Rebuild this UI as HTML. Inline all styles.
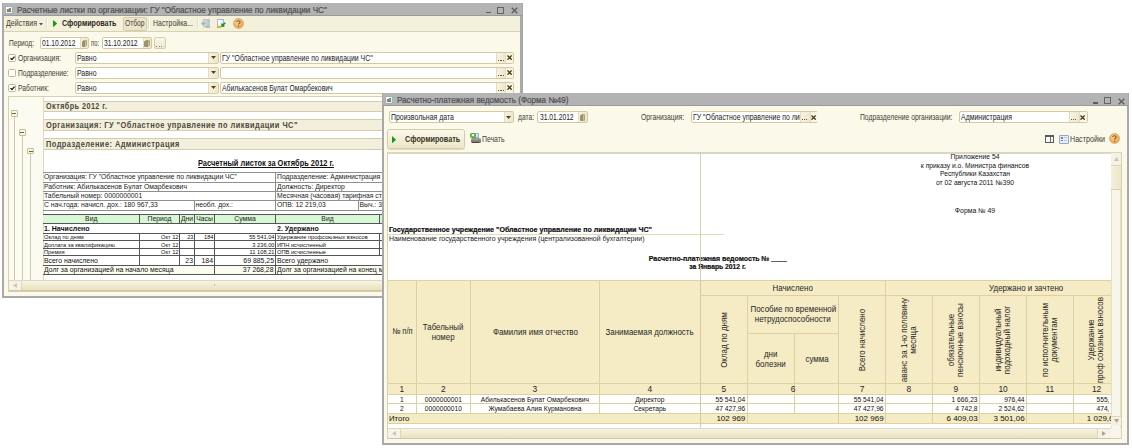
<!DOCTYPE html>
<html><head><meta charset="utf-8">
<style>
*{margin:0;padding:0;box-sizing:border-box}
html,body{width:1132px;height:448px;overflow:hidden;background:#fff;font-family:"Liberation Sans",sans-serif;color:#222}
.a{position:absolute}
.t{position:absolute;white-space:nowrap;line-height:1}
</style></head><body>
<div class="a" style="left:2px;top:3px;width:521px;height:295px;background:#a9a9a9"></div>
<div class="a" style="left:3px;top:3px;width:519px;height:12px;background:#b3b3b3"></div>
<div class="a" style="left:3px;top:15px;width:519px;height:1px;background:#9a9a9a"></div>
<div class="a" style="left:4px;top:16px;width:516px;height:280px;background:#fbf9ea"></div>
<div class="a" style="left:5px;top:5.6px;width:7.5px;height:8.2px;background:linear-gradient(135deg,#ffffff,#dfe7f2);border:1px solid #9fb0c6;border-radius:1px"></div>
<div class="a" style="left:6.8px;top:8.8px;width:2px;height:3.4px;background:#e4584a"></div>
<div class="a" style="left:8.8px;top:8.2px;width:2px;height:4px;background:#48ae4a"></div>
<div class="t" style="left:16.7px;top:5.77px;font-size:8.3px;color:#4e4e4e;transform:scaleX(0.977);transform-origin:0 0;-webkit-text-stroke:0.2px #4e4e4e;">Расчетные листки по организации: ГУ "Областное управление по ликвидации ЧС"</div>
<div class="a" style="left:486px;top:11.5px;width:5.3px;height:1.5px;background:#5c5c5c"></div>
<div class="a" style="left:497px;top:6.5px;width:7px;height:7px;border:1px solid #646464;border-top-width:1.5px"></div>
<svg class="a" style="left:511px;top:7px" width="7" height="7" viewBox="0 0 7 7"><path d="M0.7 0.7L6.3 6.3M6.3 0.7L0.7 6.3" stroke="#5c5c5c" stroke-width="1.25"/></svg>
<div class="a" style="left:4px;top:16px;width:516px;height:15px;background:#f3f0dc"></div>
<div class="a" style="left:4px;top:31px;width:516px;height:1px;background:#d9d2b2"></div>
<div class="t" style="left:6px;top:19.17px;font-size:8.3px;color:#434032;transform:scaleX(0.852);transform-origin:0 0;">Действия</div>
<svg class="a" style="left:38.8px;top:23.3px" width="4" height="2.5" viewBox="0 0 4 2.5"><path d="M0 0H4L2 2.5Z" fill="#555"/></svg>
<div class="a" style="left:46px;top:18px;width:1px;height:11px;background:#e6e0c6;box-shadow:1px 0 0 #fffdf4"></div>
<svg class="a" style="left:53px;top:20.3px" width="4.3" height="7.2" viewBox="0 0 4.3 7.2"><path d="M0 0L4.3 3.6L0 7.2Z" fill="#17961a"/></svg>
<div class="t" style="left:61.5px;top:19.17px;font-size:8.3px;color:#2e2a18;font-weight:bold;transform:scaleX(0.862);transform-origin:0 0;">Сформировать</div>
<div class="a" style="left:122.5px;top:17px;width:24.3px;height:13.8px;background:#ebe6cb;border:1px solid #d6ceab;border-radius:2px"></div>
<div class="t" style="left:124.5px;top:19.17px;font-size:8.3px;color:#434032;transform:scaleX(0.804);transform-origin:0 0;">Отбор</div>
<div class="a" style="left:148px;top:18px;width:1px;height:11px;background:#e6e0c6;box-shadow:1px 0 0 #fffdf4"></div>
<div class="t" style="left:153px;top:19.17px;font-size:8.3px;color:#434032;transform:scaleX(0.837);transform-origin:0 0;">Настройка...</div>
<div class="a" style="left:197px;top:18px;width:1px;height:11px;background:#e6e0c6;box-shadow:1px 0 0 #fffdf4"></div>
<div class="a" style="left:203px;top:19px;width:6.5px;height:8px;background:linear-gradient(90deg,#cfd8e2,#bcc7d4);border:1px solid #b9c4d0"></div>
<svg class="a" style="left:200.5px;top:21px" width="5" height="5" viewBox="0 0 5 5"><path d="M4.5 2.5H1M2.5 1L1 2.5L2.5 4" fill="none" stroke="#9bbca6" stroke-width="1.4"/></svg>
<svg class="a" style="left:205px;top:24.5px" width="5.5" height="3" viewBox="0 0 5.5 3"><path d="M0 3L2.75 0L5.5 3Z" fill="#bdb8a8"/></svg>
<div class="a" style="left:217px;top:19px;width:7px;height:8px;background:linear-gradient(90deg,#ffffff,#dfe8f3);border:1px solid #a6b8cf"></div>
<svg class="a" style="left:216px;top:25px" width="6" height="3.2" viewBox="0 0 6 3.2"><path d="M0 3.2L3 0L6 3.2Z" fill="#e8b420"/></svg>
<svg class="a" style="left:220.5px;top:21.5px" width="5" height="5" viewBox="0 0 5 5"><path d="M4.3 0.7L1.2 3.8M1 1.6V4H3.4" fill="none" stroke="#1e9030" stroke-width="1.5"/></svg>
<svg class="a" style="left:232.5px;top:18.1px" width="11" height="11" viewBox="0 0 11 11"><defs><radialGradient id="hg238" cx="45%" cy="40%" r="60%"><stop offset="0" stop-color="#fbd9a0"/><stop offset="0.65" stop-color="#f4b25a"/><stop offset="1" stop-color="#e9a04a"/></radialGradient></defs><circle cx="5.5" cy="5.5" r="5" fill="url(#hg238)" stroke="#d8a872" stroke-width="0.8"/><path d="M3.9 4.3Q3.9 2.8 5.5 2.8Q7.1 2.8 7.1 4.2Q7.1 5 6.1 5.5Q5.6 5.8 5.6 6.6" fill="none" stroke="#7e5a3a" stroke-width="1.1"/><circle cx="5.6" cy="8.1" r="0.7" fill="#7e5a3a"/></svg>
<div class="t" style="left:8.5px;top:38.57px;font-size:8.3px;color:#434032;transform:scaleX(0.796);transform-origin:0 0;">Период:</div>
<div class="a" style="left:39.5px;top:37px;width:49.5px;height:12px;background:#fff;border:1px solid #d3caa2;border-radius:2px"></div>
<div class="t" style="left:41.5px;top:38.57px;font-size:8.3px;color:#222;transform:scaleX(0.804);transform-origin:0 0;">01.10.2012</div>
<div class="a" style="left:80px;top:38px;width:8px;height:10px;background:linear-gradient(90deg,#f4f1de,#ebe6cb);border-left:1px solid #e2dcc0"></div>
<div class="a" style="left:82.5px;top:39.8px;width:4.5px;height:6.5px;background:#b0a679;border-radius:1px"></div>
<div class="a" style="left:81.8px;top:40.6px;width:4.5px;height:6.5px;background:#9c9264;border-radius:1px;border-right:1px solid #c8c09a"></div>
<div class="t" style="left:91px;top:38.57px;font-size:8.3px;color:#434032;transform:scaleX(0.701);transform-origin:0 0;">по:</div>
<div class="a" style="left:102px;top:37px;width:49.5px;height:12px;background:#fff;border:1px solid #d3caa2;border-radius:2px"></div>
<div class="t" style="left:104px;top:38.57px;font-size:8.3px;color:#222;transform:scaleX(0.809);transform-origin:0 0;">31.10.2012</div>
<div class="a" style="left:142.5px;top:38px;width:8px;height:10px;background:linear-gradient(90deg,#f4f1de,#ebe6cb);border-left:1px solid #e2dcc0"></div>
<div class="a" style="left:145.0px;top:39.8px;width:4.5px;height:6.5px;background:#b0a679;border-radius:1px"></div>
<div class="a" style="left:144.3px;top:40.6px;width:4.5px;height:6.5px;background:#9c9264;border-radius:1px;border-right:1px solid #c8c09a"></div>
<div class="a" style="left:153.5px;top:37px;width:12px;height:12px;background:linear-gradient(#f8f6e8,#ede8d0);border:1px solid #d6ceab;border-radius:2px"></div>
<div class="a" style="left:156.3px;top:45.5px;width:1px;height:1px;background:#8c8466"></div>
<div class="a" style="left:158.60000000000002px;top:45.5px;width:1px;height:1px;background:#8c8466"></div>
<div class="a" style="left:160.9px;top:45.5px;width:1px;height:1px;background:#8c8466"></div>
<div class="a" style="left:8.3px;top:54px;width:7.8px;height:7.8px;background:#fff;border:1px solid #c2b994;border-radius:1.5px"></div>
<svg class="a" style="left:9.8px;top:55.8px" width="5" height="4.4" viewBox="0 0 5 4.4"><path d="M0.5 2.2L1.9 3.7L4.5 0.6" fill="none" stroke="#111" stroke-width="1.2"/></svg>
<div class="t" style="left:18px;top:53.57px;font-size:8.3px;color:#434032;transform:scaleX(0.821);transform-origin:0 0;">Организация:</div>
<div class="a" style="left:75px;top:52px;width:143.5px;height:11.6px;background:#fff;border:1px solid #d3caa2;border-radius:2px"></div>
<div class="t" style="left:77px;top:53.57px;font-size:8.3px;color:#222;transform:scaleX(0.83);transform-origin:0 0;">Равно</div>
<div class="a" style="left:208.4px;top:53px;width:9.6px;height:9.6px;background:linear-gradient(90deg,#f4f1de,#ece7cd);border-left:1px solid #e2dcc0"></div>
<svg class="a" style="left:210.70000000000002px;top:56.3px" width="5" height="3" viewBox="0 0 5 3"><path d="M0 0H5L2.5 3Z" fill="#5a4208"/></svg>
<div class="a" style="left:220.2px;top:52px;width:294px;height:11.6px;background:#fff;border:1px solid #d3caa2;border-radius:2px"></div>
<div class="t" style="left:221.8px;top:53.57px;font-size:8.3px;color:#222;transform:scaleX(0.833);transform-origin:0 0;">ГУ "Областное управление по ликвидации ЧС"</div>
<div class="a" style="left:496.4px;top:53px;width:8.9px;height:9.6px;background:linear-gradient(90deg,#f6f3e2,#ede8cf);border-left:1px solid #e2dcc0"></div>
<div class="a" style="left:498.2px;top:59.6px;width:1.2px;height:1.2px;background:#6a5a28"></div>
<div class="a" style="left:500.4px;top:59.6px;width:1.2px;height:1.2px;background:#6a5a28"></div>
<div class="a" style="left:502.59999999999997px;top:59.6px;width:1.2px;height:1.2px;background:#6a5a28"></div>
<div class="a" style="left:505.3px;top:53px;width:8.2px;height:9.6px;background:#f7f5e8;border-left:1px solid #e2dcc0"></div>
<svg class="a" style="left:506.8px;top:55.199999999999996px" width="5.2" height="5.2" viewBox="0 0 5.2 5.2"><path d="M0.5 0.5L4.7 4.7M4.7 0.5L0.5 4.7" stroke="#4a3808" stroke-width="1.3"/></svg>
<div class="a" style="left:8.3px;top:69px;width:7.8px;height:7.8px;background:#fff;border:1px solid #c2b994;border-radius:1.5px"></div>
<div class="t" style="left:18px;top:68.57px;font-size:8.3px;color:#434032;transform:scaleX(0.806);transform-origin:0 0;">Подразделение:</div>
<div class="a" style="left:75px;top:67px;width:143.5px;height:11.6px;background:#fff;border:1px solid #d3caa2;border-radius:2px"></div>
<div class="t" style="left:77px;top:68.57px;font-size:8.3px;color:#222;transform:scaleX(0.83);transform-origin:0 0;">Равно</div>
<div class="a" style="left:208.4px;top:68px;width:9.6px;height:9.6px;background:linear-gradient(90deg,#f4f1de,#ece7cd);border-left:1px solid #e2dcc0"></div>
<svg class="a" style="left:210.70000000000002px;top:71.3px" width="5" height="3" viewBox="0 0 5 3"><path d="M0 0H5L2.5 3Z" fill="#5a4208"/></svg>
<div class="a" style="left:220.2px;top:67px;width:294px;height:11.6px;background:#fff;border:1px solid #d3caa2;border-radius:2px"></div>
<div class="a" style="left:496.4px;top:68px;width:8.9px;height:9.6px;background:linear-gradient(90deg,#f6f3e2,#ede8cf);border-left:1px solid #e2dcc0"></div>
<div class="a" style="left:498.2px;top:74.6px;width:1.2px;height:1.2px;background:#6a5a28"></div>
<div class="a" style="left:500.4px;top:74.6px;width:1.2px;height:1.2px;background:#6a5a28"></div>
<div class="a" style="left:502.59999999999997px;top:74.6px;width:1.2px;height:1.2px;background:#6a5a28"></div>
<div class="a" style="left:505.3px;top:68px;width:8.2px;height:9.6px;background:#f7f5e8;border-left:1px solid #e2dcc0"></div>
<svg class="a" style="left:506.8px;top:70.2px" width="5.2" height="5.2" viewBox="0 0 5.2 5.2"><path d="M0.5 0.5L4.7 4.7M4.7 0.5L0.5 4.7" stroke="#4a3808" stroke-width="1.3"/></svg>
<div class="a" style="left:8.3px;top:84px;width:7.8px;height:7.8px;background:#fff;border:1px solid #c2b994;border-radius:1.5px"></div>
<svg class="a" style="left:9.8px;top:85.8px" width="5" height="4.4" viewBox="0 0 5 4.4"><path d="M0.5 2.2L1.9 3.7L4.5 0.6" fill="none" stroke="#111" stroke-width="1.2"/></svg>
<div class="t" style="left:18px;top:83.57px;font-size:8.3px;color:#434032;transform:scaleX(0.815);transform-origin:0 0;">Работник:</div>
<div class="a" style="left:75px;top:82px;width:143.5px;height:11.6px;background:#fff;border:1px solid #d3caa2;border-radius:2px"></div>
<div class="t" style="left:77px;top:83.57px;font-size:8.3px;color:#222;transform:scaleX(0.83);transform-origin:0 0;">Равно</div>
<div class="a" style="left:208.4px;top:83px;width:9.6px;height:9.6px;background:linear-gradient(90deg,#f4f1de,#ece7cd);border-left:1px solid #e2dcc0"></div>
<svg class="a" style="left:210.70000000000002px;top:86.3px" width="5" height="3" viewBox="0 0 5 3"><path d="M0 0H5L2.5 3Z" fill="#5a4208"/></svg>
<div class="a" style="left:220.2px;top:82px;width:294px;height:11.6px;background:#fff;border:1px solid #d3caa2;border-radius:2px"></div>
<div class="t" style="left:221.8px;top:83.57px;font-size:8.3px;color:#222;transform:scaleX(0.825);transform-origin:0 0;">Абилькасенов Булат Омарбекович</div>
<div class="a" style="left:496.4px;top:83px;width:8.9px;height:9.6px;background:linear-gradient(90deg,#f6f3e2,#ede8cf);border-left:1px solid #e2dcc0"></div>
<div class="a" style="left:498.2px;top:89.6px;width:1.2px;height:1.2px;background:#6a5a28"></div>
<div class="a" style="left:500.4px;top:89.6px;width:1.2px;height:1.2px;background:#6a5a28"></div>
<div class="a" style="left:502.59999999999997px;top:89.6px;width:1.2px;height:1.2px;background:#6a5a28"></div>
<div class="a" style="left:505.3px;top:83px;width:8.2px;height:9.6px;background:#f7f5e8;border-left:1px solid #e2dcc0"></div>
<svg class="a" style="left:506.8px;top:85.2px" width="5.2" height="5.2" viewBox="0 0 5.2 5.2"><path d="M0.5 0.5L4.7 4.7M4.7 0.5L0.5 4.7" stroke="#4a3808" stroke-width="1.3"/></svg>
<div class="a" style="left:8px;top:96px;width:380px;height:196px;background:#fcfbf1;border:1px solid #d8d1b0"></div>
<div class="a" style="left:42.5px;top:97px;width:345px;height:183px;background:#fff;border-left:1px solid #e0d9bb"></div>
<div class="a" style="left:43.5px;top:101px;width:345px;height:11px;background:#f2efdc;border-top:1px solid #d3cca9;border-bottom:1px solid #d3cca9"></div>
<div class="a" style="left:43.5px;top:119px;width:345px;height:12px;background:#f2efdc;border-top:1px solid #d3cca9;border-bottom:1px solid #d3cca9"></div>
<div class="a" style="left:43.5px;top:138px;width:345px;height:12px;background:#f2efdc;border-top:1px solid #d3cca9;border-bottom:1px solid #d3cca9"></div>
<div class="t" style="left:45.5px;top:102.38px;font-size:9.0px;color:#4b4a40;font-weight:bold;transform:scaleX(0.805);transform-origin:0 0;letter-spacing:0.55px;">Октябрь 2012 г.</div>
<div class="t" style="left:45.5px;top:120.98px;font-size:9.0px;color:#4b4a40;font-weight:bold;transform:scaleX(0.827);transform-origin:0 0;letter-spacing:0.55px;">Организация: ГУ "Областное управление по ликвидации ЧС"</div>
<div class="t" style="left:45.5px;top:139.58px;font-size:9.0px;color:#4b4a40;font-weight:bold;transform:scaleX(0.823);transform-origin:0 0;letter-spacing:0.55px;">Подразделение: Администрация</div>
<div class="a" style="left:13.8px;top:116.5px;width:1px;height:163.5px;background:#d2caa6"></div>
<div class="a" style="left:10.8px;top:110.2px;width:7px;height:6.6px;background:#f8f6e6;border:1px solid #c5bd96;border-radius:1px"></div>
<div class="a" style="left:12.3px;top:113.0px;width:4px;height:1px;background:#6e6444"></div>
<div class="a" style="left:21.9px;top:135.3px;width:1px;height:144.7px;background:#d2caa6"></div>
<div class="a" style="left:18.9px;top:129.0px;width:7px;height:6.6px;background:#f8f6e6;border:1px solid #c5bd96;border-radius:1px"></div>
<div class="a" style="left:20.4px;top:131.8px;width:4px;height:1px;background:#6e6444"></div>
<div class="a" style="left:30.1px;top:154.1px;width:1px;height:125.9px;background:#d2caa6"></div>
<div class="a" style="left:27.1px;top:147.79999999999998px;width:7px;height:6.6px;background:#f8f6e6;border:1px solid #c5bd96;border-radius:1px"></div>
<div class="a" style="left:28.6px;top:150.6px;width:4px;height:1px;background:#6e6444"></div>
<div class="t" style="left:197.6px;top:159.17px;font-size:8.3px;color:#111;font-weight:bold;transform:scaleX(0.897);transform-origin:0 0;text-decoration:underline;">Расчетный листок за Октябрь 2012 г.</div>
<div class="a" style="left:43px;top:171.8px;width:345px;height:1px;background:#8f8f8f"></div>
<div class="a" style="left:43px;top:181.5px;width:345px;height:1px;background:#8f8f8f"></div>
<div class="a" style="left:43px;top:190.8px;width:345px;height:1px;background:#8f8f8f"></div>
<div class="a" style="left:43px;top:200.0px;width:345px;height:1px;background:#8f8f8f"></div>
<div class="a" style="left:43px;top:209.8px;width:345px;height:1px;background:#8f8f8f"></div>
<div class="a" style="left:275px;top:172px;width:1px;height:38.5px;background:#8f8f8f"></div>
<div class="a" style="left:193.5px;top:200.5px;width:1px;height:10px;background:#8f8f8f"></div>
<div class="a" style="left:357.5px;top:200.5px;width:1px;height:10px;background:#8f8f8f"></div>
<div class="t" style="left:44px;top:174.24px;font-size:6.8px;color:#1a1a1a;">Организация: ГУ "Областное управление по ликвидации ЧС"</div>
<div class="t" style="left:277px;top:174.24px;font-size:6.8px;color:#1a1a1a;">Подразделение: Администрация</div>
<div class="t" style="left:44px;top:183.74px;font-size:6.8px;color:#1a1a1a;">Работник: Абилькасенов  Булат  Омарбекович</div>
<div class="t" style="left:277px;top:183.74px;font-size:6.8px;color:#1a1a1a;">Должность: Директор</div>
<div class="t" style="left:44px;top:193.04px;font-size:6.8px;color:#1a1a1a;">Табельный номер: 0000000001</div>
<div class="t" style="left:277px;top:193.04px;font-size:6.8px;color:#1a1a1a;">Месячная (часовая) тарифная ставка</div>
<div class="t" style="left:44px;top:202.44px;font-size:6.8px;color:#1a1a1a;">С нач.года: начисл. дох.: 180 967,33</div>
<div class="t" style="left:195.5px;top:202.44px;font-size:6.8px;color:#1a1a1a;">необл. дох.:</div>
<div class="t" style="left:277px;top:202.44px;font-size:6.8px;color:#1a1a1a;">ОПВ: 12 219,03</div>
<div class="t" style="left:359.5px;top:202.44px;font-size:6.8px;color:#1a1a1a;">Выч.: 3</div>
<div class="a" style="left:43px;top:214px;width:345px;height:10px;background:#d8f7d4;border-top:1px solid #555;border-bottom:1px solid #555"></div>
<div class="a" style="left:139.0px;top:214px;width:1px;height:10px;background:#555"></div>
<div class="a" style="left:179.0px;top:214px;width:1px;height:10px;background:#555"></div>
<div class="a" style="left:194.0px;top:214px;width:1px;height:10px;background:#555"></div>
<div class="a" style="left:214.0px;top:214px;width:1px;height:10px;background:#555"></div>
<div class="a" style="left:275.0px;top:214px;width:1px;height:10px;background:#555"></div>
<div class="a" style="left:379.0px;top:214px;width:1px;height:10px;background:#555"></div>
<div class="t" style="left:43px;top:216.24px;font-size:6.8px;color:#222;width:96.5px;text-align:center;">Вид</div>
<div class="t" style="left:139.5px;top:216.24px;font-size:6.8px;color:#222;width:40.0px;text-align:center;">Период</div>
<div class="t" style="left:179.5px;top:216.24px;font-size:6.8px;color:#222;width:15.0px;text-align:center;">Дни</div>
<div class="t" style="left:194.5px;top:216.24px;font-size:6.8px;color:#222;width:20.0px;text-align:center;">Часы</div>
<div class="t" style="left:214.5px;top:216.24px;font-size:6.8px;color:#222;width:61.0px;text-align:center;">Сумма</div>
<div class="t" style="left:275.5px;top:216.24px;font-size:6.8px;color:#222;width:104.0px;text-align:center;">Вид</div>
<div class="t" style="left:44px;top:225.07px;font-size:7px;color:#111;font-weight:bold;">1. Начислено</div>
<div class="t" style="left:277px;top:225.07px;font-size:7px;color:#111;font-weight:bold;">2. Удержано</div>
<div class="a" style="left:43px;top:232.7px;width:345px;height:1px;background:#555"></div>
<div class="a" style="left:43px;top:240.0px;width:345px;height:1px;background:#555"></div>
<div class="a" style="left:43px;top:247.7px;width:345px;height:1px;background:#555"></div>
<div class="a" style="left:43px;top:254.9px;width:345px;height:1px;background:#555"></div>
<div class="a" style="left:43px;top:264.5px;width:345px;height:1px;background:#555"></div>
<div class="a" style="left:43px;top:273.5px;width:345px;height:1px;background:#555"></div>
<div class="a" style="left:139.0px;top:233px;width:1px;height:32px;background:#555"></div>
<div class="a" style="left:179.0px;top:233px;width:1px;height:32px;background:#555"></div>
<div class="a" style="left:194.0px;top:233px;width:1px;height:32px;background:#555"></div>
<div class="a" style="left:214.0px;top:233px;width:1px;height:32px;background:#555"></div>
<div class="a" style="left:275.0px;top:233px;width:1px;height:32px;background:#555"></div>
<div class="a" style="left:378.5px;top:233px;width:1px;height:22.5px;background:#555"></div>
<div class="t" style="left:44px;top:234.32px;font-size:6.0px;color:#111;transform:scaleX(0.95);transform-origin:0 0;">Оклад по дням</div>
<div class="t" style="left:139.5px;top:234.32px;font-size:6.0px;color:#111;width:38.5px;text-align:right;transform:scaleX(0.95);transform-origin:100% 0;">Окт 12</div>
<div class="t" style="left:179.5px;top:234.32px;font-size:6.0px;color:#111;width:13.5px;text-align:right;transform:scaleX(0.95);transform-origin:100% 0;">23</div>
<div class="t" style="left:194.5px;top:234.32px;font-size:6.0px;color:#111;width:18.5px;text-align:right;transform:scaleX(0.95);transform-origin:100% 0;">184</div>
<div class="t" style="left:214.5px;top:234.32px;font-size:6.0px;color:#111;width:59.5px;text-align:right;transform:scaleX(0.95);transform-origin:100% 0;">55 541,04</div>
<div class="t" style="left:277px;top:234.32px;font-size:6.0px;color:#111;transform:scaleX(0.95);transform-origin:0 0;">Удержание профсоюзных взносов</div>
<div class="t" style="left:44px;top:241.92px;font-size:6.0px;color:#111;transform:scaleX(0.95);transform-origin:0 0;">Доплата за квалификацию</div>
<div class="t" style="left:139.5px;top:241.92px;font-size:6.0px;color:#111;width:38.5px;text-align:right;transform:scaleX(0.95);transform-origin:100% 0;">Окт 12</div>
<div class="t" style="left:214.5px;top:241.92px;font-size:6.0px;color:#111;width:59.5px;text-align:right;transform:scaleX(0.95);transform-origin:100% 0;">3 236,00</div>
<div class="t" style="left:277px;top:241.92px;font-size:6.0px;color:#111;transform:scaleX(0.95);transform-origin:0 0;">ИПН исчисленный</div>
<div class="t" style="left:44px;top:249.42px;font-size:6.0px;color:#111;transform:scaleX(0.95);transform-origin:0 0;">Премия</div>
<div class="t" style="left:139.5px;top:249.42px;font-size:6.0px;color:#111;width:38.5px;text-align:right;transform:scaleX(0.95);transform-origin:100% 0;">Окт 12</div>
<div class="t" style="left:214.5px;top:249.42px;font-size:6.0px;color:#111;width:59.5px;text-align:right;transform:scaleX(0.95);transform-origin:100% 0;">11 108,21</div>
<div class="t" style="left:277px;top:249.42px;font-size:6.0px;color:#111;transform:scaleX(0.95);transform-origin:0 0;">ОПВ исчисленные</div>
<div class="t" style="left:44px;top:257.96px;font-size:6.9px;color:#111;">Всего начислено</div>
<div class="t" style="left:179.5px;top:257.96px;font-size:6.9px;color:#111;width:13.5px;text-align:right;">23</div>
<div class="t" style="left:194.5px;top:257.96px;font-size:6.9px;color:#111;width:18.5px;text-align:right;">184</div>
<div class="t" style="left:214.5px;top:257.96px;font-size:6.9px;color:#111;width:59.5px;text-align:right;">69 885,25</div>
<div class="t" style="left:277px;top:257.96px;font-size:6.9px;color:#111;">Всего удержано</div>
<div class="a" style="left:43px;top:265.5px;width:345px;height:8px;background:#fdfcf1"></div>
<div class="a" style="left:214px;top:265px;width:1px;height:9px;background:#555"></div>
<div class="a" style="left:275px;top:265px;width:1px;height:9px;background:#555"></div>
<div class="t" style="left:44px;top:267.16px;font-size:6.9px;color:#111;">Долг за организацией на начало месяца</div>
<div class="t" style="left:214.5px;top:267.16px;font-size:6.9px;color:#111;width:59px;text-align:right;">37 268,28</div>
<div class="t" style="left:277px;top:267.16px;font-size:6.9px;color:#111;">Долг за организацией на конец месяца</div>
<div class="a" style="left:9px;top:280px;width:379px;height:11px;background:linear-gradient(#f6f3e3,#efe9cc 60%,#e8e1c0);border-top:1px solid #dbd8c8;border-bottom:1px solid #cfc6a2"></div>
<div class="a" style="left:9px;top:281px;width:12.5px;height:9px;background:#f5f3e6;border-right:1px solid #ddd6ba"></div>
<svg class="a" style="left:13px;top:283px" width="4" height="5" viewBox="0 0 4 5"><path d="M4 0V5L0 2.5Z" fill="#cbc7b8"/></svg>
<div class="a" style="left:214px;top:284px;width:1px;height:2px;background:#c8c0a0"></div>
<div class="a" style="left:382px;top:93px;width:747px;height:352px;background:#a9a9a9"></div>
<div class="a" style="left:383px;top:93px;width:745px;height:12.3px;background:#b3b3b3"></div>
<div class="a" style="left:383px;top:105.3px;width:745px;height:1px;background:#9a9a9a"></div>
<div class="a" style="left:384px;top:106.3px;width:743px;height:336.7px;background:#fbf9ea"></div>
<div class="a" style="left:385px;top:95.8px;width:7.5px;height:8.2px;background:linear-gradient(135deg,#ffffff,#dfe7f2);border:1px solid #9fb0c6;border-radius:1px"></div>
<div class="a" style="left:386.8px;top:99.0px;width:2px;height:3.4px;background:#e4584a"></div>
<div class="a" style="left:388.8px;top:98.39999999999999px;width:2px;height:4px;background:#48ae4a"></div>
<div class="t" style="left:396.8px;top:96.47px;font-size:8.3px;color:#4e4e4e;transform:scaleX(0.97);transform-origin:0 0;-webkit-text-stroke:0.2px #4e4e4e;">Расчетно-платежная ведомость (Форма №49)</div>
<div class="a" style="left:1093px;top:102.0px;width:5.3px;height:1.5px;background:#5c5c5c"></div>
<div class="a" style="left:1104px;top:97.0px;width:7px;height:7px;border:1px solid #646464;border-top-width:1.5px"></div>
<svg class="a" style="left:1118px;top:97.5px" width="7" height="7" viewBox="0 0 7 7"><path d="M0.7 0.7L6.3 6.3M6.3 0.7L0.7 6.3" stroke="#5c5c5c" stroke-width="1.25"/></svg>
<div class="a" style="left:389px;top:111.3px;width:124.7px;height:11.6px;background:#fff;border:1px solid #d3caa2;border-radius:2px"></div>
<div class="t" style="left:391px;top:113.17px;font-size:8.3px;color:#222;transform:scaleX(0.838);transform-origin:0 0;">Произвольная дата</div>
<div class="a" style="left:504.2px;top:112.3px;width:8.5px;height:9.6px;background:linear-gradient(90deg,#f4f1de,#ece7cd);border-left:1px solid #e2dcc0"></div>
<svg class="a" style="left:505.95px;top:115.6px" width="5" height="3" viewBox="0 0 5 3"><path d="M0 0H5L2.5 3Z" fill="#5a4208"/></svg>
<div class="t" style="left:517.5px;top:113.17px;font-size:8.3px;color:#434032;transform:scaleX(0.804);transform-origin:0 0;">дата:</div>
<div class="a" style="left:537.4px;top:111.3px;width:50.2px;height:11.6px;background:#fff;border:1px solid #d3caa2;border-radius:2px"></div>
<div class="t" style="left:539.6px;top:113.17px;font-size:8.3px;color:#222;transform:scaleX(0.809);transform-origin:0 0;">31.01.2012</div>
<div class="a" style="left:578px;top:112.3px;width:8.6px;height:9.6px;background:linear-gradient(90deg,#f4f1de,#ebe6cb);border-left:1px solid #e2dcc0"></div>
<div class="a" style="left:580.5px;top:114.1px;width:4.5px;height:6.5px;background:#b0a679;border-radius:1px"></div>
<div class="a" style="left:579.8px;top:114.89999999999999px;width:4.5px;height:6.5px;background:#9c9264;border-radius:1px;border-right:1px solid #c8c09a"></div>
<div class="t" style="left:641.3px;top:113.17px;font-size:8.3px;color:#434032;transform:scaleX(0.823);transform-origin:0 0;">Организация:</div>
<div class="a" style="left:691.2px;top:111.3px;width:127.3px;height:11.6px;background:#fff;border:1px solid #d3caa2;border-radius:2px"></div>
<div class="a" style="left:692px;top:112px;width:107.5px;height:10px;overflow:hidden">
<div class="t" style="left:0.8px;top:1.17px;font-size:8.3px;color:#222;transform:scaleX(0.833);transform-origin:0 0;">ГУ "Областное управление по ликвидации ЧС"</div>
</div>
<div class="a" style="left:800px;top:112.3px;width:9.5px;height:9.6px;background:linear-gradient(90deg,#f6f3e2,#ede8cf);border-left:1px solid #e2dcc0"></div>
<div class="a" style="left:801.8px;top:118.89999999999999px;width:1.2px;height:1.2px;background:#6a5a28"></div>
<div class="a" style="left:804.0px;top:118.89999999999999px;width:1.2px;height:1.2px;background:#6a5a28"></div>
<div class="a" style="left:806.1999999999999px;top:118.89999999999999px;width:1.2px;height:1.2px;background:#6a5a28"></div>
<div class="a" style="left:809.5px;top:112.3px;width:8.2px;height:9.6px;background:#f7f5e8;border-left:1px solid #e2dcc0"></div>
<svg class="a" style="left:811.0px;top:114.5px" width="5.2" height="5.2" viewBox="0 0 5.2 5.2"><path d="M0.5 0.5L4.7 4.7M4.7 0.5L0.5 4.7" stroke="#4a3808" stroke-width="1.3"/></svg>
<div class="t" style="left:859.5px;top:113.17px;font-size:8.3px;color:#434032;transform:scaleX(0.815);transform-origin:0 0;">Подразделение организации:</div>
<div class="a" style="left:959px;top:111.3px;width:128.8px;height:11.6px;background:#fff;border:1px solid #d3caa2;border-radius:2px"></div>
<div class="t" style="left:960.9px;top:113.17px;font-size:8.3px;color:#222;transform:scaleX(0.836);transform-origin:0 0;">Администрация</div>
<div class="a" style="left:1069px;top:112.3px;width:9.5px;height:9.6px;background:linear-gradient(90deg,#f6f3e2,#ede8cf);border-left:1px solid #e2dcc0"></div>
<div class="a" style="left:1070.8px;top:118.89999999999999px;width:1.2px;height:1.2px;background:#6a5a28"></div>
<div class="a" style="left:1073.0px;top:118.89999999999999px;width:1.2px;height:1.2px;background:#6a5a28"></div>
<div class="a" style="left:1075.2px;top:118.89999999999999px;width:1.2px;height:1.2px;background:#6a5a28"></div>
<div class="a" style="left:1078.5px;top:112.3px;width:8.5px;height:9.6px;background:#f7f5e8;border-left:1px solid #e2dcc0"></div>
<svg class="a" style="left:1080.15px;top:114.5px" width="5.2" height="5.2" viewBox="0 0 5.2 5.2"><path d="M0.5 0.5L4.7 4.7M4.7 0.5L0.5 4.7" stroke="#4a3808" stroke-width="1.3"/></svg>
<div class="a" style="left:387.4px;top:129.4px;width:77.2px;height:20px;background:linear-gradient(#faf8ea,#ece6ca);border:1px solid #d5cca5;border-radius:2.5px;box-shadow:0 1px 1px #e0d9bb"></div>
<svg class="a" style="left:392px;top:135.5px" width="4" height="7.4" viewBox="0 0 4 7.4"><path d="M0 0L4 3.7L0 7.4Z" fill="#17961a"/></svg>
<div class="t" style="left:405.3px;top:135.37px;font-size:8.3px;color:#3b3418;font-weight:bold;transform:scaleX(0.873);transform-origin:0 0;">Сформировать</div>
<div class="a" style="left:473.5px;top:133px;width:5px;height:5px;background:linear-gradient(135deg,#ffffff,#bcd4ec);border:1px solid #9ab2cc"></div>
<div class="a" style="left:470.3px;top:132.6px;width:5.4px;height:5px;background:#72c064;border:1px solid #4e9e44;border-radius:1.5px"></div>
<div class="a" style="left:471.5px;top:134px;width:2.5px;height:2px;background:#e8f6e2"></div>
<div class="a" style="left:470.5px;top:137.5px;width:10px;height:5px;background:linear-gradient(#a8a4a0,#6e6862);border-radius:1.5px"></div>
<div class="a" style="left:472.5px;top:139px;width:1.5px;height:1.2px;background:#e87060"></div>
<div class="a" style="left:476px;top:139px;width:2px;height:1.2px;background:#7ac06a"></div>
<div class="a" style="left:472px;top:141.5px;width:7px;height:1.8px;background:#4a4440"></div>
<div class="t" style="left:482px;top:135.37px;font-size:8.3px;color:#434032;transform:scaleX(0.828);transform-origin:0 0;">Печать</div>
<div class="a" style="left:1045px;top:135px;width:9px;height:8px;background:#fafafa;border:1px solid #5a5a5a;border-top-width:2.5px"></div>
<div class="a" style="left:1050px;top:137px;width:1px;height:5px;background:#6a6a6a"></div>
<div class="a" style="left:1059px;top:135px;width:10px;height:8.5px;background:#e6edf7;border:1px solid #93a8c8;border-radius:1px"></div>
<div class="a" style="left:1061px;top:137px;width:2px;height:1.5px;background:#6a82b0"></div>
<div class="a" style="left:1064px;top:137px;width:3px;height:1px;background:#b8c4d8"></div>
<div class="a" style="left:1061px;top:139.5px;width:2px;height:1.5px;background:#6a82b0"></div>
<div class="a" style="left:1064px;top:139.5px;width:3px;height:1px;background:#b8c4d8"></div>
<div class="t" style="left:1070px;top:135.37px;font-size:8.3px;color:#434032;transform:scaleX(0.86);transform-origin:0 0;">Настройки</div>
<svg class="a" style="left:1108.7px;top:133.1px" width="11" height="11" viewBox="0 0 11 11"><defs><radialGradient id="hg1114" cx="45%" cy="40%" r="60%"><stop offset="0" stop-color="#fbd9a0"/><stop offset="0.65" stop-color="#f4b25a"/><stop offset="1" stop-color="#e9a04a"/></radialGradient></defs><circle cx="5.5" cy="5.5" r="5" fill="url(#hg1114)" stroke="#d8a872" stroke-width="0.8"/><path d="M3.9 4.3Q3.9 2.8 5.5 2.8Q7.1 2.8 7.1 4.2Q7.1 5 6.1 5.5Q5.6 5.8 5.6 6.6" fill="none" stroke="#7e5a3a" stroke-width="1.1"/><circle cx="5.6" cy="8.1" r="0.7" fill="#7e5a3a"/></svg>
<div class="a" style="left:387px;top:152px;width:735px;height:287px;background:#fff;border:1px solid #d8d1b0;border-top:2px solid #dbd6bf"></div>
<div class="a" style="left:388px;top:233.7px;width:336px;height:1px;background:#e3dbb8"></div>
<div class="t" style="left:875px;top:154.09px;font-size:6.75px;color:#111;width:200px;text-align:center;">Приложение 54</div>
<div class="t" style="left:875px;top:162.69px;font-size:6.75px;color:#111;width:200px;text-align:center;">к приказу и.о. Министра финансов</div>
<div class="t" style="left:875px;top:171.29px;font-size:6.75px;color:#111;width:200px;text-align:center;">Республики Казахстан</div>
<div class="t" style="left:875px;top:180.29px;font-size:6.75px;color:#111;width:200px;text-align:center;">от 02 августа 2011 №390</div>
<div class="t" style="left:875px;top:208.16px;font-size:6.9px;color:#111;width:200px;text-align:center;">Форма № 49</div>
<div class="t" style="left:388.9px;top:226.79px;font-size:7.1px;color:#111;font-weight:bold;-webkit-text-stroke:0.2px #111;">Государственное учреждение "Областное управление по ликвидации ЧС"</div>
<div class="t" style="left:388.9px;top:236.32px;font-size:6.95px;color:#222;">Наименование государственного учреждения (централизованной бухгалтерии)</div>
<div class="t" style="left:648.8px;top:255.07px;font-size:7px;color:#111;font-weight:bold;-webkit-text-stroke:0.2px #111;">Расчетно-платежная ведомость № ____</div>
<div class="t" style="left:689.3px;top:264.49px;font-size:6.75px;color:#111;font-weight:bold;-webkit-text-stroke:0.2px #111;">за Январь 2012 г.</div>
<div class="a" style="left:388px;top:280.2px;width:722.8px;height:114px;background:#f5ecc5"></div>
<div class="a" style="left:388px;top:279.7px;width:722.8px;height:1px;background:#ddd19e"></div>
<div class="a" style="left:700.3px;top:295px;width:410.5px;height:1px;background:#ddd19e"></div>
<div class="a" style="left:747.3px;top:332.8px;width:91.5px;height:1px;background:#ddd19e"></div>
<div class="a" style="left:388px;top:383.3px;width:722.8px;height:1px;background:#ddd19e"></div>
<div class="a" style="left:415.8px;top:280.2px;width:1px;height:133.10000000000002px;background:#ddd19e"></div>
<div class="a" style="left:470.0px;top:280.2px;width:1px;height:133.10000000000002px;background:#ddd19e"></div>
<div class="a" style="left:598.8px;top:280.2px;width:1px;height:133.10000000000002px;background:#ddd19e"></div>
<div class="a" style="left:699.8px;top:280.2px;width:1px;height:143.2px;background:#ddd19e"></div>
<div class="a" style="left:885.1px;top:280.2px;width:1px;height:143.2px;background:#ddd19e"></div>
<div class="a" style="left:746.8px;top:295.5px;width:1px;height:127.89999999999998px;background:#ddd19e"></div>
<div class="a" style="left:838.3px;top:295.5px;width:1px;height:127.89999999999998px;background:#ddd19e"></div>
<div class="a" style="left:931.8px;top:295.5px;width:1px;height:127.89999999999998px;background:#ddd19e"></div>
<div class="a" style="left:979.1px;top:295.5px;width:1px;height:127.89999999999998px;background:#ddd19e"></div>
<div class="a" style="left:1026.1px;top:295.5px;width:1px;height:127.89999999999998px;background:#ddd19e"></div>
<div class="a" style="left:1072.6px;top:295.5px;width:1px;height:127.89999999999998px;background:#ddd19e"></div>
<div class="a" style="left:794.1px;top:333.3px;width:1px;height:80.0px;background:#ddd19e"></div>
<div class="t" style="left:387.5px;top:328.36px;font-size:8.2px;color:#262626;width:28.80000000000001px;text-align:center;transform:scaleX(0.925);transform-origin:50% 0;">№ п/п</div>
<div class="t" style="left:416.3px;top:323.30px;font-size:8.5px;color:#262626;width:54.19999999999999px;text-align:center;transform:scaleX(0.925);transform-origin:50% 0;">Табельный</div>
<div class="t" style="left:416.3px;top:333.10px;font-size:8.5px;color:#262626;width:54.19999999999999px;text-align:center;transform:scaleX(0.925);transform-origin:50% 0;">номер</div>
<div class="t" style="left:470.5px;top:328.02px;font-size:8.6px;color:#262626;width:128.79999999999995px;text-align:center;transform:scaleX(0.925);transform-origin:50% 0;">Фамилия имя отчество</div>
<div class="t" style="left:599.3px;top:328.02px;font-size:8.6px;color:#262626;width:101.0px;text-align:center;transform:scaleX(0.925);transform-origin:50% 0;">Занимаемая должность</div>
<div class="t" style="left:700.3px;top:284.02px;font-size:8.6px;color:#262626;width:185.30000000000007px;text-align:center;transform:scaleX(0.925);transform-origin:50% 0;">Начислено</div>
<div class="t" style="left:885.6px;top:284.02px;font-size:8.6px;color:#262626;width:280.4px;text-align:center;transform:scaleX(0.925);transform-origin:50% 0;">Удержано и зачтено</div>
<div class="t" style="left:747.3px;top:305.32px;font-size:8.6px;color:#262626;width:91.5px;text-align:center;transform:scaleX(0.925);transform-origin:50% 0;">Пособие по временной</div>
<div class="t" style="left:747.3px;top:315.32px;font-size:8.6px;color:#262626;width:91.5px;text-align:center;transform:scaleX(0.925);transform-origin:50% 0;">нетрудоспособности</div>
<div class="t" style="left:747.3px;top:349.72px;font-size:8.6px;color:#262626;width:47.30000000000007px;text-align:center;transform:scaleX(0.925);transform-origin:50% 0;">дни</div>
<div class="t" style="left:747.3px;top:359.72px;font-size:8.6px;color:#262626;width:47.30000000000007px;text-align:center;transform:scaleX(0.925);transform-origin:50% 0;">болезни</div>
<div class="t" style="left:794.6px;top:354.72px;font-size:8.6px;color:#262626;width:44.19999999999993px;text-align:center;transform:scaleX(0.925);transform-origin:50% 0;">сумма</div>
<div class="a" style="left:723.8px;top:339.5px;width:0;height:0"><div style="position:absolute;left:0;top:0;transform:translate(-50%,-50%) rotate(-90deg) scaleX(0.93);white-space:nowrap;text-align:center;font-size:8.6px;line-height:9px;color:#262626">Оклад по дням</div></div>
<div class="a" style="left:862.2px;top:339.5px;width:0;height:0"><div style="position:absolute;left:0;top:0;transform:translate(-50%,-50%) rotate(-90deg) scaleX(0.93);white-space:nowrap;text-align:center;font-size:8.6px;line-height:9px;color:#262626">Всего начислено</div></div>
<div class="a" style="left:909px;top:339.5px;width:0;height:0"><div style="position:absolute;left:0;top:0;transform:translate(-50%,-50%) rotate(-90deg) scaleX(0.93);white-space:nowrap;text-align:center;font-size:8.6px;line-height:9px;color:#262626">аванс за 1-ю половину<br>месяца</div></div>
<div class="a" style="left:956px;top:339.5px;width:0;height:0"><div style="position:absolute;left:0;top:0;transform:translate(-50%,-50%) rotate(-90deg) scaleX(0.93);white-space:nowrap;text-align:center;font-size:8.6px;line-height:9px;color:#262626">обязательные<br>пенсионные взносы</div></div>
<div class="a" style="left:1003px;top:339.5px;width:0;height:0"><div style="position:absolute;left:0;top:0;transform:translate(-50%,-50%) rotate(-90deg) scaleX(0.93);white-space:nowrap;text-align:center;font-size:8.6px;line-height:9px;color:#262626">индивидуальный<br>подоходный налог</div></div>
<div class="a" style="left:1050px;top:339.5px;width:0;height:0"><div style="position:absolute;left:0;top:0;transform:translate(-50%,-50%) rotate(-90deg) scaleX(0.93);white-space:nowrap;text-align:center;font-size:8.6px;line-height:9px;color:#262626">по исполнительным<br>документам</div></div>
<div class="a" style="left:1096px;top:339.5px;width:0;height:0"><div style="position:absolute;left:0;top:0;transform:translate(-50%,-50%) rotate(-90deg) scaleX(0.93);white-space:nowrap;text-align:center;font-size:8.6px;line-height:9px;color:#262626">Удержание<br>проф союзных взносов</div></div>
<div class="t" style="left:387.5px;top:385.29px;font-size:8.4px;color:#262626;width:28.80000000000001px;text-align:center;">1</div>
<div class="t" style="left:416.3px;top:385.29px;font-size:8.4px;color:#262626;width:54.19999999999999px;text-align:center;">2</div>
<div class="t" style="left:470.5px;top:385.29px;font-size:8.4px;color:#262626;width:128.79999999999995px;text-align:center;">3</div>
<div class="t" style="left:599.3px;top:385.29px;font-size:8.4px;color:#262626;width:101.0px;text-align:center;">4</div>
<div class="t" style="left:700.3px;top:385.29px;font-size:8.4px;color:#262626;width:47.0px;text-align:center;">5</div>
<div class="t" style="left:747.3px;top:385.29px;font-size:8.4px;color:#262626;width:91.5px;text-align:center;">6</div>
<div class="t" style="left:838.8px;top:385.29px;font-size:8.4px;color:#262626;width:46.80000000000007px;text-align:center;">7</div>
<div class="t" style="left:885.6px;top:385.29px;font-size:8.4px;color:#262626;width:46.69999999999993px;text-align:center;">8</div>
<div class="t" style="left:932.3px;top:385.29px;font-size:8.4px;color:#262626;width:47.30000000000007px;text-align:center;">9</div>
<div class="t" style="left:979.6px;top:385.29px;font-size:8.4px;color:#262626;width:46.999999999999886px;text-align:center;">10</div>
<div class="t" style="left:1026.6px;top:385.29px;font-size:8.4px;color:#262626;width:46.5px;text-align:center;">11</div>
<div class="t" style="left:1073.1px;top:385.29px;font-size:8.4px;color:#262626;width:46.90000000000009px;text-align:center;">12</div>
<div class="a" style="left:388px;top:393.8px;width:722.8px;height:1px;background:#ddd19e"></div>
<div class="a" style="left:388px;top:403.0px;width:722.8px;height:1px;background:#ddd19e"></div>
<div class="a" style="left:388px;top:413px;width:722.8px;height:11px;background:#f5ecc5;border-top:1px solid #ddd19e;border-bottom:1px solid #ddd19e"></div>
<div class="a" style="left:699.8px;top:413px;width:1px;height:10.4px;background:#ddd19e"></div>
<div class="a" style="left:746.8px;top:413px;width:1px;height:10.4px;background:#ddd19e"></div>
<div class="a" style="left:838.3px;top:413px;width:1px;height:10.4px;background:#ddd19e"></div>
<div class="a" style="left:885.1px;top:413px;width:1px;height:10.4px;background:#ddd19e"></div>
<div class="a" style="left:931.8px;top:413px;width:1px;height:10.4px;background:#ddd19e"></div>
<div class="a" style="left:979.1px;top:413px;width:1px;height:10.4px;background:#ddd19e"></div>
<div class="a" style="left:1026.1px;top:413px;width:1px;height:10.4px;background:#ddd19e"></div>
<div class="a" style="left:1072.6px;top:413px;width:1px;height:10.4px;background:#ddd19e"></div>
<div class="t" style="left:387.5px;top:396.63px;font-size:6.7px;color:#111;width:28.80000000000001px;text-align:center;">1</div>
<div class="t" style="left:416.3px;top:396.63px;font-size:6.7px;color:#111;width:54.19999999999999px;text-align:center;">0000000001</div>
<div class="t" style="left:470.5px;top:396.63px;font-size:6.7px;color:#111;width:128.79999999999995px;text-align:center;">Абилькасенов  Булат  Омарбекович</div>
<div class="t" style="left:599.3px;top:396.63px;font-size:6.7px;color:#111;width:101.0px;text-align:center;">Директор</div>
<div class="t" style="left:700.3px;top:396.63px;font-size:6.7px;color:#111;width:45.0px;text-align:right;">55 541,04</div>
<div class="t" style="left:838.8px;top:396.63px;font-size:6.7px;color:#111;width:44.80000000000007px;text-align:right;">55 541,04</div>
<div class="t" style="left:932.3px;top:396.63px;font-size:6.7px;color:#111;width:45.30000000000007px;text-align:right;">1 666,23</div>
<div class="t" style="left:979.6px;top:396.63px;font-size:6.7px;color:#111;width:44.999999999999886px;text-align:right;">976,44</div>
<div class="t" style="left:1073.1px;top:396.63px;font-size:6.7px;color:#111;width:36.40000000000009px;text-align:right;">555,</div>
<div class="t" style="left:387.5px;top:405.83px;font-size:6.7px;color:#111;width:28.80000000000001px;text-align:center;">2</div>
<div class="t" style="left:416.3px;top:405.83px;font-size:6.7px;color:#111;width:54.19999999999999px;text-align:center;">0000000010</div>
<div class="t" style="left:470.5px;top:405.83px;font-size:6.7px;color:#111;width:128.79999999999995px;text-align:center;">Жумабаева Алия Курмановна</div>
<div class="t" style="left:599.3px;top:405.83px;font-size:6.7px;color:#111;width:101.0px;text-align:center;">Секретарь</div>
<div class="t" style="left:700.3px;top:405.83px;font-size:6.7px;color:#111;width:45.0px;text-align:right;">47 427,96</div>
<div class="t" style="left:838.8px;top:405.83px;font-size:6.7px;color:#111;width:44.80000000000007px;text-align:right;">47 427,96</div>
<div class="t" style="left:932.3px;top:405.83px;font-size:6.7px;color:#111;width:45.30000000000007px;text-align:right;">4 742,8</div>
<div class="t" style="left:979.6px;top:405.83px;font-size:6.7px;color:#111;width:44.999999999999886px;text-align:right;">2 524,62</div>
<div class="t" style="left:1073.1px;top:405.83px;font-size:6.7px;color:#111;width:36.40000000000009px;text-align:right;">474,</div>
<div class="t" style="left:389px;top:415.00px;font-size:7.8px;color:#111;">Итого</div>
<div class="t" style="left:700.3px;top:414.83px;font-size:8.0px;color:#111;width:45.0px;text-align:right;">102 969</div>
<div class="t" style="left:838.8px;top:414.83px;font-size:8.0px;color:#111;width:44.80000000000007px;text-align:right;">102 969</div>
<div class="t" style="left:932.3px;top:414.83px;font-size:8.0px;color:#111;width:45.30000000000007px;text-align:right;">6 409,03</div>
<div class="t" style="left:979.6px;top:414.83px;font-size:8.0px;color:#111;width:44.999999999999886px;text-align:right;">3 501,06</div>
<div class="t" style="left:1073.1px;top:414.83px;font-size:8.0px;color:#111;width:44.90000000000009px;text-align:right;">1 029,66</div>
<div class="a" style="left:700px;top:152px;width:1px;height:276px;background:#cfc6a4;opacity:0.8"></div>
<div class="a" style="left:1110.5px;top:153px;width:10.5px;height:275.5px;background:#f8f6ea;border-left:1px solid #e6e0c6;border-right:1px solid #e6e0c6"></div>
<div class="a" style="left:1111px;top:153px;width:10px;height:12.5px;background:#f4f2e4;border-bottom:1px solid #ddd6ba"></div>
<svg class="a" style="left:1113.5px;top:157px" width="5" height="4" viewBox="0 0 5 4"><path d="M0 4H5L2.5 0Z" fill="#c8c4b4"/></svg>
<div class="a" style="left:1111px;top:165.5px;width:10px;height:24px;background:linear-gradient(90deg,#f3f0dc,#ebe5c8);border-bottom:1px solid #d8d0ae"></div>
<div class="a" style="left:1111px;top:415.7px;width:10px;height:10px;background:#f4f1e0;border-top:1px solid #ddd6ba"></div>
<svg class="a" style="left:1113.5px;top:419px" width="5" height="4" viewBox="0 0 5 4"><path d="M0 0H5L2.5 4Z" fill="#a8a498"/></svg>
<div class="a" style="left:388px;top:428px;width:723px;height:11px;background:linear-gradient(#f6f3e3,#efe9cc 60%,#e8e1c0);border-top:1px solid #dbd8c8;border-bottom:1px solid #cfc6a2"></div>
<div class="a" style="left:388px;top:429px;width:12.5px;height:9px;background:#f5f3e6;border-right:1px solid #ddd6ba"></div>
<svg class="a" style="left:392px;top:431px" width="4" height="5" viewBox="0 0 4 5"><path d="M4 0V5L0 2.5Z" fill="#cbc7b8"/></svg>
<div class="a" style="left:1097px;top:429px;width:14px;height:9px;background:#f5f3e6;border-left:1px solid #ddd6ba"></div>
<svg class="a" style="left:1102px;top:431px" width="4" height="5" viewBox="0 0 4 5"><path d="M0 0V5L4 2.5Z" fill="#a8a498"/></svg>
<div class="a" style="left:1111px;top:428.4px;width:10px;height:10px;background:#f8f6ea"></div>
</body></html>
